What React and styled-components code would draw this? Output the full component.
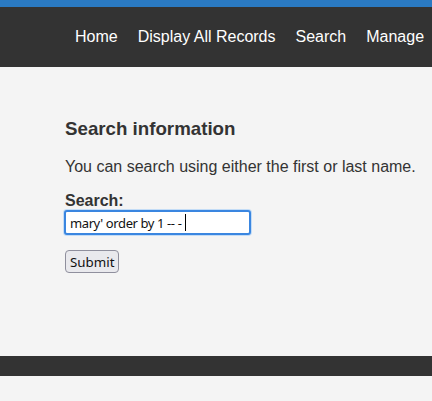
import React from "react";
import styled, { createGlobalStyle } from "styled-components";

const Global = createGlobalStyle`
  html, body { margin: 0; padding: 0; overflow: hidden; }
  body {
    background: #f4f4f4;
    color: #333333;
    font-family: "Liberation Sans", Arial, sans-serif;
    font-size: 16px;
  }
`;

const Header = styled.header`
  border-top: 7px solid #2a7ac3;
  background: #333333;
  height: 60px;
  display: flex;
  align-items: center;
  padding-left: 65px;
  overflow: hidden;
`;

const Nav = styled.nav`
  display: flex;
  white-space: nowrap;
`;

const NavLink = styled.a`
  color: #ffffff;
  text-decoration: none;
  padding: 0 10px;
  font-size: 16px;
`;

const Main = styled.main`
  box-sizing: border-box;
  height: 289px;
  padding: 32px 0 0 65px;
  white-space: nowrap;
`;

const Title = styled.h3`
  font-size: 18.72px;
  font-weight: bold;
  margin: 18.72px 0;
`;

const Text = styled.p`
  margin: 16px 0;
`;

const Label = styled.label`
  display: block;
  font-weight: bold;
`;

const Field = styled.div`
  position: relative;
  display: inline-block;
`;

const Input = styled.input`
  box-sizing: border-box;
  width: 187px;
  height: 25px;
  margin: 0 0 0 -1px;
  padding: 1px 4px;
  border: 2px solid #3a86e0;
  border-radius: 3px;
  box-shadow: 0 0 0 1px #c3dcf6;
  background: #ffffff;
  color: #111111;
  font-family: "Noto Sans", "Open Sans", sans-serif;
  font-size: 13px;
  letter-spacing: -0.4px;
  outline: none;
  caret-color: transparent;
`;

const Caret = styled.span`
  position: absolute;
  left: 120px;
  top: 4px;
  width: 1px;
  height: 17px;
  background: #000000;
`;

const ButtonRow = styled.div`
  margin-top: 15px;
`;

const Button = styled.button`
  font-family: "Noto Sans", "Open Sans", sans-serif;
  font-size: 13.33px;
  color: #111111;
  background: #e9e9ed;
  border: 1px solid #8f8f9d;
  border-radius: 4px;
  padding: 1px 4px;
  height: 23px;
`;

const Footer = styled.footer`
  background: #333333;
  height: 20px;
`;

export default function App() {
  return (
    <>
      <Global />
      <Header>
        <Nav>
          <NavLink href="#">Home</NavLink>
          <NavLink href="#">Display All Records</NavLink>
          <NavLink href="#">Search</NavLink>
          <NavLink href="#">Manage</NavLink>
        </Nav>
      </Header>
      <Main>
        <Title>Search information</Title>
        <Text>You can search using either the first or last name.</Text>
        <form onSubmit={(e) => e.preventDefault()}>
          <Label htmlFor="search">Search:</Label>
          <Field>
            <Input id="search" readOnly value="mary' order by 1 -- -" />
            <Caret />
          </Field>
          <ButtonRow>
            <Button type="submit">Submit</Button>
          </ButtonRow>
        </form>
      </Main>
      <Footer />
    </>
  );
}
